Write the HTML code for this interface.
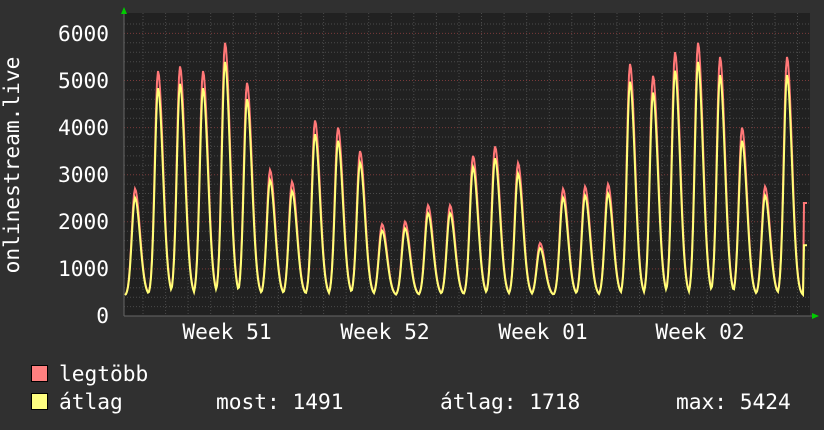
<!DOCTYPE html>
<html><head><meta charset="utf-8"><style>
html,body{margin:0;padding:0;background:#303030;}
svg{display:block}
text{font-family:"DejaVu Sans Mono","Liberation Mono",monospace;font-size:21.2px;fill:#fff}
</style></head><body>
<svg id="s" width="824" height="430" xmlns="http://www.w3.org/2000/svg">
<rect width="824" height="430" fill="#303030"/>
<rect x="124" y="13" width="686" height="303" fill="#212121"/>
<g id="grid"></g>
<path id="mx" fill="none" stroke="#ff7777" stroke-width="2"/>
<path id="av" fill="none" stroke="#ffff77" stroke-width="2"/>
<line x1="124" y1="316" x2="814" y2="316" stroke="#666" stroke-width="1"/>
<line x1="124" y1="10" x2="124" y2="316" stroke="#666" stroke-width="1"/>
<polygon points="121,14 127,14 124,7" fill="#00cc00"/>
<polygon points="812,313 812,319 819,316" fill="#00cc00"/>
<g text-anchor="end">
<text x="109" y="41">6000</text><text x="109" y="88">5000</text><text x="109" y="135">4000</text>
<text x="109" y="182">3000</text><text x="109" y="229">2000</text><text x="109" y="276">1000</text>
<text x="109" y="323">0</text>
</g>
<g text-anchor="middle">
<text x="227" y="339">Week 51</text><text x="385" y="339">Week 52</text>
<text x="543" y="339">Week 01</text><text x="700" y="339">Week 02</text>
</g>
<text transform="translate(19,165) rotate(-90)" text-anchor="middle">onlinestream.live</text>
<rect x="31.5" y="365.5" width="16" height="16" fill="#ff8080" stroke="#000"/>
<rect x="31.5" y="393.5" width="16" height="16" fill="#ffff80" stroke="#000"/>
<text x="59" y="381">legtöbb</text>
<text x="59" y="409">átlag</text>
<text x="216" y="409">most: 1491</text>
<text x="440" y="409">átlag: 1718</text>
<text x="676" y="409">max: 5424</text>
</svg>
<script>
var g=document.getElementById('grid'),h='';
for(var v=200;v<=6200;v+=200){var y=316-v*0.0471;if(y<13)break;
 h+='<line x1="124" x2="810" y1="'+y.toFixed(1)+'" y2="'+y.toFixed(1)+'" stroke="'+(v%1000==0?'#7a3a3a':'#4a4a4a')+'" stroke-dasharray="1,2"/>';}
for(var x=143;x<810;x+=22.57){h+='<line y1="13" y2="316" x1="'+x.toFixed(1)+'" x2="'+x.toFixed(1)+'" stroke="#4a4a4a" stroke-dasharray="1,2"/>';}
g.innerHTML=h;
var P=[[135,2700],[158,5200],[180,5300],[203,5200],[225,5800],[247,4950],[270,3100],[292,2850],[315,4150],[338,4000],[360,3500],[382,1950],[405,2000],[428,2350],[450,2350],[473,3400],[495,3600],[518,3250],[540,1550],[563,2700],[585,2750],[608,2800],[630,5350],[653,5100],[675,5600],[698,5800],[720,5500],[742,4000],[765,2750],[787,5500]];
function val(x,k){var best=0;for(var i=0;i<P.length;i++){var d=x-P[i][0];var pk=P[i][1]*k;var sg=d<0?4.5:7;var f=Math.exp(-Math.pow(d/sg,2));var b=(pk-430)*f;if(b>best)best=b;}return 430+best;}
function path(k){var d='';for(var x=125;x<=807;x++){var v=val(x,k);if(x>=804)v=k>0.95?2400:1500;d+=(x==125?'M':'L')+x+','+(316-v*0.0471).toFixed(1);}return d;}
document.getElementById('mx').setAttribute('d',path(1));
document.getElementById('av').setAttribute('d',path(0.93));
</script>
</body></html>
